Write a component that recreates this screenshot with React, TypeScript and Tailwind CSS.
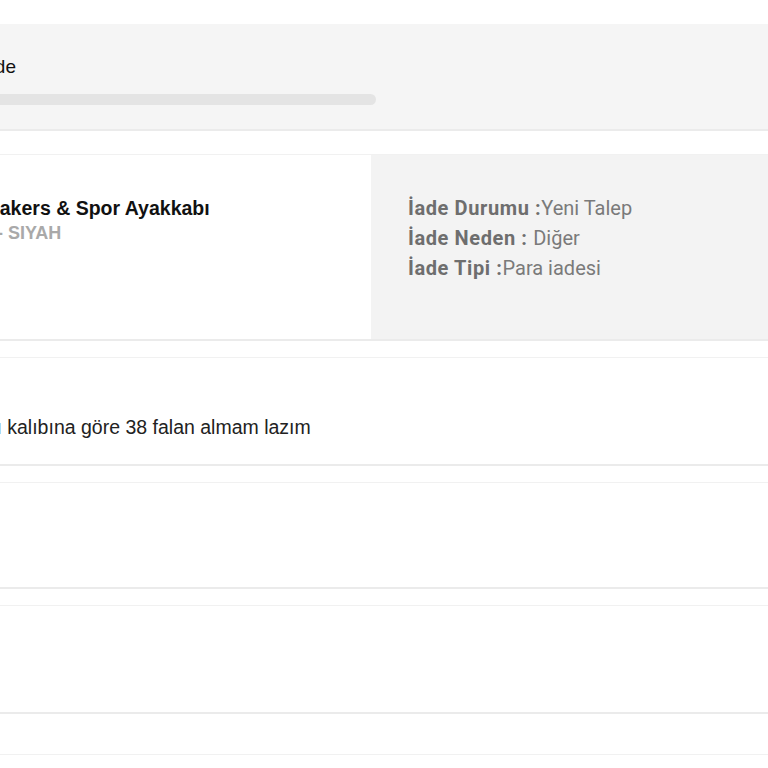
const sans = "font-['Liberation_Sans',Arial,sans-serif]";

function Card({ children, className = "" }: { children?: React.ReactNode; className?: string }) {
    return (
        <div className={`border-t border-b-2 border-t-[#f1f1f1] border-b-[#ebebeb] bg-white ${className}`}>
            {children}
        </div>
    );
}

export default function App() {
    return (
        <div className={`h-[768px] w-[768px] overflow-hidden bg-white ${sans}`}>
            <div className="h-[24px]" />

            {/* iade ilerleme */}
            <div className="h-[107px] overflow-hidden border-b-2 border-[#ebebeb] bg-[#f5f5f5]">
                <div className="-ml-[21px] pt-[32px] text-[19px] leading-[22px] text-[#111]">İade</div>
                <div className="-ml-[40px] mt-[16px] h-[11px] w-[416px] rounded-full bg-[#e4e4e4]" />
            </div>

            <div className="h-[23px]" />

            <Card className="flex h-[187px]">
                <div className="w-[371px] overflow-hidden pt-[42px]">
                    <div className="-ml-[36px] whitespace-nowrap text-[19.5px] font-bold leading-[22px] text-[#111]">
                        Sneakers &amp; Spor Ayakkabı
                    </div>
                    <div className="-ml-[3px] mt-[4px] whitespace-nowrap text-[18px] font-bold leading-[20px] text-[#a9a9a9]">
                        - SIYAH
                    </div>
                </div>
                <div className="flex-1 bg-[#f3f3f3] pl-[37px] pt-[38px] font-['Roboto',sans-serif] text-[20px] leading-[30px] text-[#7a7a7a]">
                    <div>
                        <span className="font-bold tracking-[0.6px] text-[#6e6e6e]">İade Durumu :</span>Yeni Talep
                    </div>
                    <div>
                        <span className="font-bold tracking-[0.6px] text-[#6e6e6e]">İade Neden : </span>Diğer
                    </div>
                    <div>
                        <span className="font-bold tracking-[0.6px] text-[#6e6e6e]">İade Tipi :</span>Para iadesi
                    </div>
                </div>
            </Card>

            <div className="h-[16px]" />

            <Card className="h-[109px] overflow-hidden pt-[58px]">
                <div className="-ml-[78px] whitespace-nowrap text-[19.5px] leading-[22px] text-[#222]">
                    Ayakkabı kalıbına göre 38 falan almam lazım
                </div>
            </Card>

            <div className="h-[16px]" />
            <Card className="h-[107px]" />
            <div className="h-[16px]" />
            <Card className="h-[109px]" />
            <div className="h-[40px]" />
            <Card className="h-[40px]" />
        </div>
    );
}
